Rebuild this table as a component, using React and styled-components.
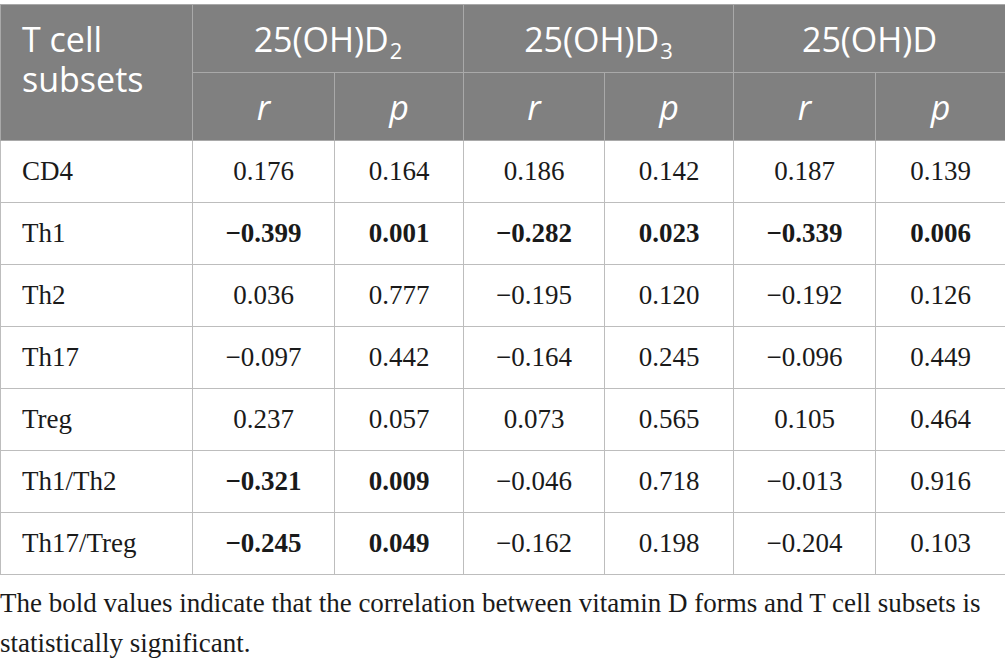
import React from 'react';
import styled, { createGlobalStyle } from 'styled-components';

const GlobalStyle = createGlobalStyle`
	html, body {
		margin: 0;
		padding: 0;
		background: #ffffff;
	}
`;

const Page = styled.div`
	width: 1005px;
	padding-top: 4px;
	font-family: 'Liberation Serif', 'Times New Roman', serif;
	color: #1a1a1a;
`;

const Table = styled.table`
	border-collapse: collapse;
	table-layout: fixed;
	width: 1005px;
`;

const HeadCell = styled.th`
	background: #808080;
	color: #ffffff;
	font-family: 'Open Sans', 'Liberation Sans', sans-serif;
	font-weight: 400;
	font-size: 34px;
	line-height: 40px;
	border: 1px solid #a9a9a9;
	height: 67px;
	padding: 0;
	text-align: center;
	vertical-align: middle;
	font-style: ${(p) => (p.$italic ? 'italic' : 'normal')};
`;

const CornerCell = styled(HeadCell)`
	text-align: left;
	vertical-align: top;
	padding: 14px 0 0 21px;
`;

const Sub = styled.sub`
	font-size: 22px;
	line-height: 0;
	vertical-align: -7px;
	margin-left: 1px;
`;

const Cell = styled.td`
	border: 1px solid #bdbdbd;
	height: 61px;
	padding: 0;
	font-size: 27px;
	text-align: center;
	vertical-align: middle;
	font-weight: ${(p) => (p.$bold ? 700 : 400)};
`;

const NameCell = styled(Cell)`
	text-align: left;
	padding-left: 21px;
`;

const Note = styled.p`
	margin: 8px 0 0;
	font-size: 27px;
	line-height: 40px;
	width: 1000px;
`;

const widths = [192, 142, 129, 141, 129, 142, 130];

const rows = [
	['CD4', ['0.176', '0.164', '0.186', '0.142', '0.187', '0.139'], []],
	['Th1', ['\u22120.399', '0.001', '\u22120.282', '0.023', '\u22120.339', '0.006'], [0, 1, 2, 3, 4, 5]],
	['Th2', ['0.036', '0.777', '\u22120.195', '0.120', '\u22120.192', '0.126'], []],
	['Th17', ['\u22120.097', '0.442', '\u22120.164', '0.245', '\u22120.096', '0.449'], []],
	['Treg', ['0.237', '0.057', '0.073', '0.565', '0.105', '0.464'], []],
	['Th1/Th2', ['\u22120.321', '0.009', '\u22120.046', '0.718', '\u22120.013', '0.916'], [0, 1]],
	['Th17/Treg', ['\u22120.245', '0.049', '\u22120.162', '0.198', '\u22120.204', '0.103'], [0, 1]],
];

const App = () => {
	return (
		<Page>
			<GlobalStyle />
			<Table>
				<colgroup>
					{widths.map((w, i) => (
						<col key={i} style={{ width: w }} />
					))}
				</colgroup>
				<thead>
					<tr>
						<CornerCell rowSpan={2}>
							T cell
							<br />
							subsets
						</CornerCell>
						<HeadCell colSpan={2}>
							25(OH)D<Sub>2</Sub>
						</HeadCell>
						<HeadCell colSpan={2}>
							25(OH)D<Sub>3</Sub>
						</HeadCell>
						<HeadCell colSpan={2}>25(OH)D</HeadCell>
					</tr>
					<tr>
						<HeadCell $italic>r</HeadCell>
						<HeadCell $italic>p</HeadCell>
						<HeadCell $italic>r</HeadCell>
						<HeadCell $italic>p</HeadCell>
						<HeadCell $italic>r</HeadCell>
						<HeadCell $italic>p</HeadCell>
					</tr>
				</thead>
				<tbody>
					{rows.map(([name, values, bold]) => (
						<tr key={name}>
							<NameCell>{name}</NameCell>
							{values.map((v, i) => (
								<Cell key={i} $bold={bold.includes(i)}>
									{v}
								</Cell>
							))}
						</tr>
					))}
				</tbody>
			</Table>
			<Note>
				The bold values indicate that the correlation between vitamin D forms
				and T cell subsets is statistically significant.
			</Note>
		</Page>
	);
};

export default App;
